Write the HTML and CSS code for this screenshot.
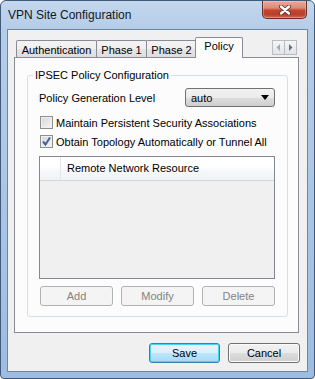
FILE: index.html
```html
<!DOCTYPE html>
<html>
<head>
  <title>VPN Site Configuration</title>
  <link rel="stylesheet" href="styles.css">
</head>
<body>
  <div class='window'>
    <div class='titlebar'>
      <span class='title'>VPN Site Configuration</span>
      <div class='close'>
        <svg width='14' height='10' viewBox='0 0 14 10'>
          <path d='M3 1.5 L11 8.5 M11 1.5 L3 8.5' stroke='#5a2a22' stroke-width='4' stroke-linecap='round'/>
          <path d='M3 1.5 L11 8.5 M11 1.5 L3 8.5' stroke='#fff' stroke-width='2.4' stroke-linecap='round'/>
        </svg>
      </div>
    </div>
    <div class='client'>
      <div class='tabs'>
        <div class='tab tab-auth'>Authentication</div>
        <div class='tab tab-p1'>Phase 1</div>
        <div class='tab tab-p2'>Phase 2</div>
        <div class='tab tab-policy active'>Policy</div>
        <div class='scroller'>
          <span class='arrow'>
            <svg width='5' height='7' viewBox='0 0 5 7'><path d='M4 0 L4 7 L0.5 3.5 Z' fill='#a3a8b4'/></svg>
          </span>
          <span class='arrow'>
            <svg width='5' height='7' viewBox='0 0 5 7'><path d='M1 0 L1 7 L4.5 3.5 Z' fill='#5f6f96'/></svg>
          </span>
        </div>
      </div>
      <div class='panel'>
        <fieldset class='group'>
          <legend>IPSEC Policy Configuration</legend>
          <div class='row'>
            <span>Policy Generation Level</span>
            <div class='combo'>
              <span>auto</span>
              <svg width='8' height='5' viewBox='0 0 8 5'><path d='M0 0 L8 0 L4 5 Z' fill='#000'/></svg>
            </div>
          </div>
          <div class='row check-row first'>
            <span class='checkbox'></span>
            <span>Maintain Persistent Security Associations</span>
          </div>
          <div class='row check-row'>
            <span class='checkbox'>
              <svg width='11' height='11' viewBox='0 0 11 11'><path d='M2 5.5 L4.5 8.5 L9 1.5' stroke='#4a5f9c' stroke-width='2' fill='none'/></svg>
            </span>
            <span>Obtain Topology Automatically or Tunnel All</span>
          </div>
          <div class='list'>
            <div class='list-header'>
              <div class='col-blank'></div>
              <div class='col-name'>Remote Network Resource</div>
            </div>
          </div>
          <div class='list-buttons'>
            <div class='btn disabled'>Add</div>
            <div class='btn disabled'>Modify</div>
            <div class='btn disabled'>Delete</div>
          </div>
        </fieldset>
      </div>
      <div class='footer'>
        <div class='btn default save'>Save</div>
        <div class='btn cancel'>Cancel</div>
      </div>
    </div>
  </div>
</body>
</html>
```

FILE: styles.css
```css
body, html {
  margin: 0;
  padding: 0;
  background: #fff;
}
.window {
  width: 315px;
  height: 379px;
  box-sizing: border-box;
  display: flex;
  flex-direction: column;
  border: 1px solid #3f5a7a;
  border-radius: 6px 6px 4px 4px;
  background: linear-gradient(to bottom, #c3d7ee 0, #b6cde8 28px, #a9c4e4 60%, #9dbce0 100%);
  font-family: "Liberation Sans", Arial, sans-serif;
  font-size: 11px;
  color: #000;
}
.titlebar {
  height: 28px;
  display: flex;
  align-items: flex-start;
  flex: none;
}
.title {
  margin: 7px 0 0 7px;
  line-height: 15px;
  font-size: 12px;
  color: #101820;
}
.close {
  margin-left: auto;
  margin-right: 7px;
  width: 45px;
  height: 18px;
  box-sizing: border-box;
  border: 1px solid #6a2e25;
  border-top: none;
  border-radius: 0 0 5px 5px;
  background: linear-gradient(to bottom, #e9a99b 0, #dc8c79 40%, #c3452f 55%, #b8402c 80%, #d06a4f 100%);
  box-shadow: inset 0 0 0 1px rgba(255, 220, 210, 0.35);
  display: flex;
  align-items: center;
  justify-content: center;
}
.client {
  flex: 1;
  margin: 0 6px 6px 6px;
  border: 1px solid #6f86a3;
  background: #f0f0f0;
  padding: 7px 8px 0 6px;
  display: flex;
  flex-direction: column;
}
.tabs {
  height: 20px;
  display: flex;
  align-items: flex-end;
  padding-left: 2px;
  position: relative;
  z-index: 1;
}
.tab {
  height: 17px;
  box-sizing: border-box;
  border: 1px solid #898c95;
  border-bottom: none;
  margin-right: -1px;
  background: linear-gradient(to bottom, #f3f3f3 0, #efefef 50%, #e5e5e5 51%, #dedede 100%);
  text-align: center;
  line-height: 16px;
  padding-top: 1px;
  border-radius: 2px 2px 0 0;
}
.tab-auth { width: 81px; }
.tab-p1 { width: 51px; }
.tab-p2 { width: 51px; }
.tab-policy { width: 48px; }
.tab.active {
  height: 21px;
  margin-bottom: -1px;
  margin-left: -1px;
  background: #fcfcfc;
  line-height: 16px;
  padding-top: 0;
  position: relative;
}
.scroller {
  margin-left: auto;
  margin-right: 2px;
  align-self: flex-start;
  margin-top: 3px;
  display: flex;
}
.arrow {
  width: 13px;
  height: 15px;
  box-sizing: border-box;
  border: 1px solid #b9bcc2;
  margin-left: -1px;
  background: linear-gradient(to bottom, #f6f6f6, #e3e4e6);
  display: flex;
  align-items: center;
  justify-content: center;
}
.panel {
  height: 276px;
  box-sizing: border-box;
  border: 1px solid #898c95;
  background: #fcfcfc;
  display: flex;
  flex-direction: column;
}
.group {
  margin: 10px 10px 16px 12px;
  padding: 6px 12px 10px 11px;
  border: 1px solid #d5dfe5;
  border-radius: 3px;
  flex: 1;
  display: flex;
  flex-direction: column;
  min-width: 0;
}
.group legend {
  padding: 0 2px;
  margin-left: -6px;
  line-height: 14px;
}
.row {
  height: 19px;
  display: flex;
  align-items: center;
  flex: none;
}
.check-row.first {
  margin-top: 6px;
}
.check-row span + span {
  margin-left: 3px;
}
.combo {
  margin-left: auto;
  width: 90px;
  height: 19px;
  box-sizing: border-box;
  border: 1px solid #707070;
  border-radius: 3px;
  background: linear-gradient(to bottom, #f2f2f2 0, #ebebeb 50%, #dddddd 51%, #cfcfcf 100%);
  display: flex;
  align-items: center;
  padding: 0 5px 0 5px;
}
.combo svg {
  margin-left: auto;
}
.checkbox {
  width: 13px;
  height: 13px;
  box-sizing: border-box;
  margin-left: 1px;
  border: 1px solid #8e8f8f;
  background: linear-gradient(135deg, #d6d6d6, #f6f6f6);
  box-shadow: inset 0 0 0 1px #f0f0f0;
  display: flex;
  align-items: center;
  justify-content: center;
}
.list {
  margin-top: 5px;
  height: 123px;
  box-sizing: border-box;
  border: 1px solid #828790;
  background: #f0f0f0;
  flex: none;
}
.list-header {
  height: 23px;
  display: flex;
  background: linear-gradient(to bottom, #ffffff 0, #ffffff 40%, #f7f8fa 60%, #f1f2f4 100%);
  border-bottom: 1px solid #d5d5d5;
}
.col-blank {
  width: 20px;
  border-right: 1px solid #e3e5e8;
}
.col-name {
  padding-left: 6px;
  line-height: 22px;
  color: #000;
}
.list-buttons {
  margin-top: 7px;
  padding-left: 1px;
  display: flex;
  justify-content: space-between;
}
.btn {
  height: 20px;
  box-sizing: border-box;
  border: 1px solid #707070;
  border-radius: 3px;
  background: linear-gradient(to bottom, #f2f2f2 0, #ebebeb 50%, #dddddd 51%, #cfcfcf 100%);
  box-shadow: inset 0 0 0 1px #fbfbfb;
  text-align: center;
  line-height: 18px;
}
.list-buttons .btn {
  width: 73px;
}
.btn.disabled {
  border-color: #adb2b5;
  background: #f4f4f4;
  box-shadow: none;
  color: #838383;
}
.footer {
  flex: 1;
  display: flex;
  justify-content: flex-end;
  align-items: flex-start;
  padding-top: 10px;
  margin-right: -1px;
  gap: 8px;
}
.save {
  width: 71px;
}
.cancel {
  width: 72px;
}
.btn.default {
  border-color: #3c7fb1;
  background: linear-gradient(to bottom, #eaf6fd 0, #d9f0fc 50%, #bee6fd 51%, #a7d9f5 100%);
  box-shadow: inset 0 0 0 1px #48d0f8;
}
```
